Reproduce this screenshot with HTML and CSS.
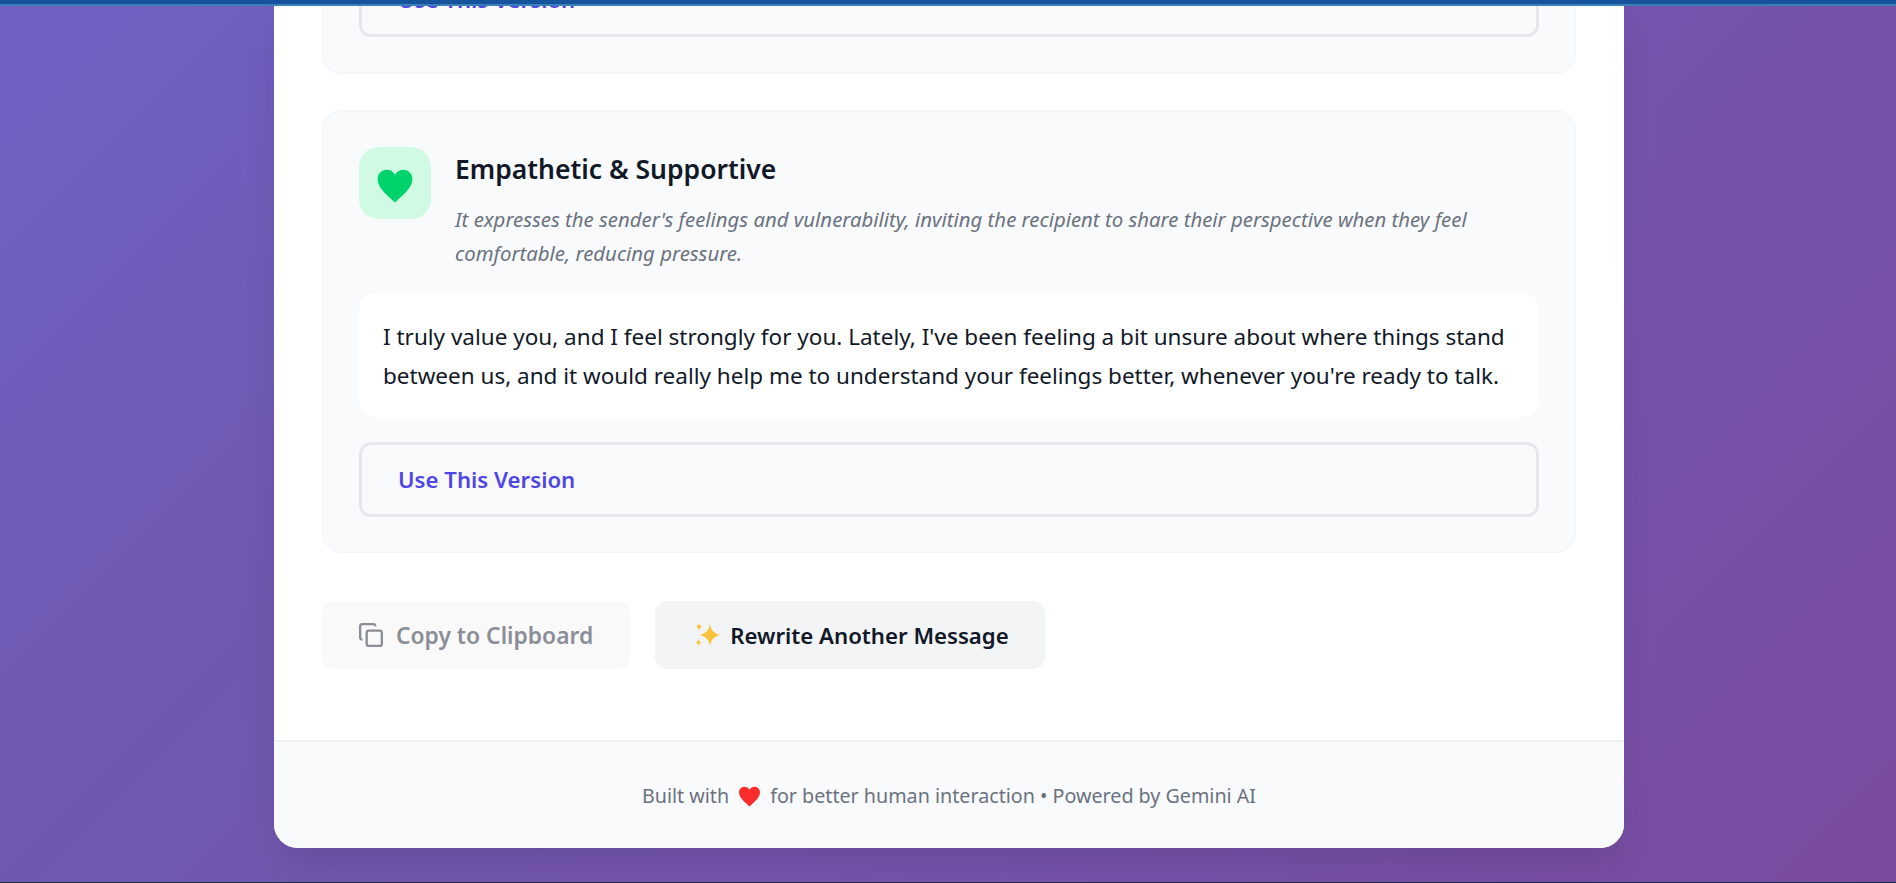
FILE: index.html
```html
<!DOCTYPE html>
<html lang="en">
<head>
    <meta charset="UTF-8">
    <meta name="viewport" content="width=device-width, initial-scale=1.0">
    <title>Message Rewriter</title>
    <link rel="stylesheet" href="styles.css">
</head>
<body>

    <div class="top-bar"></div>

    <main class="card">
        <div class="results">
            <section class="option option-clipped">
                <button class="use-btn" type="button">Use This Version</button>
            </section>

            <section class="option">
                <div class="option-head">
                    <div class="option-icon">
                        <svg viewBox="0 0 24 24" width="38" height="38" aria-hidden="true">
                            <path fill="#00d36b" d="M12 22.4C9.600 20 1 14 1 7.600 1 4.200 3.600 1.700 6.700 1.700c2.200 0 4.100 1.100 5.300 3 1.200-1.900 3.100-3 5.300-3 3.100 0 5.700 2.500 5.700 5.900 0 6.400-8.600 12.400-11 14.800z"/>
                        </svg>
                    </div>
                    <div class="option-info">
                        <h3>Empathetic &amp; Supportive</h3>
                        <p>It expresses the sender's feelings and vulnerability, inviting the recipient to share their perspective when they feel comfortable, reducing pressure.</p>
                    </div>
                </div>
                <div class="message">I truly value you, and I feel strongly for you. Lately, I've been feeling a bit unsure about where things stand between us, and it would really help me to understand your feelings better, whenever you're ready to talk.</div>
                <button class="use-btn" type="button">Use This Version</button>
            </section>
        </div>

        <div class="actions">
            <button class="action-btn copy-btn" type="button">
                <svg viewBox="0 0 24 24" width="26" height="26" fill="none" stroke="currentColor" stroke-width="2.200" aria-hidden="true">
                    <rect x="8" y="8" width="14" height="14" rx="2"/>
                    <path d="M4 16c-1.100 0-2-.9-2-2V4c0-1.100.9-2 2-2h10c1.100 0 2 .9 2 2"/>
                </svg>
                Copy to Clipboard
            </button>
            <button class="action-btn rewrite-btn" type="button">
                <svg viewBox="0 0 26 28" width="26" height="28" aria-hidden="true">
                    <path fill="#fcc23c" d="M16 3c1 6 3.500 8.800 10 11-6.500 2.200-9 5-10 11-1-6-3.500-8.800-10-11 6.500-2.200 9-5 10-11z"/>
                    <path fill="#fcc23c" d="M5 2c.5 2.200 1.300 3 3.200 3.700C6.300 6.400 5.500 7.200 5 9.400 4.500 7.200 3.700 6.400 1.800 5.700 3.700 5 4.500 4.200 5 2zM4.500 18c.4 2 1.200 2.800 3 3.500-1.800.7-2.600 1.500-3 3.500-.4-2-1.200-2.800-3-3.500 1.800-.7 2.600-1.500 3-3.500z"/>
                </svg>
                Rewrite Another Message
            </button>
        </div>

        <footer>
            Built with
            <svg class="footer-heart" viewBox="0 0 24 24" width="23" height="23" aria-hidden="true">
                <path fill="#fb2c2c" d="M12 22.400C9.600 20 1 14 1 7.600 1 4.200 3.600 1.700 6.700 1.700c2.200 0 4.100 1.100 5.300 3 1.200-1.900 3.100-3 5.300-3 3.100 0 5.700 2.500 5.700 5.900 0 6.400-8.600 12.400-11 14.800z"/>
            </svg>
            for better human interaction • Powered by Gemini AI
        </footer>
    </main>

</body>
</html>
```

FILE: styles.css
```css
html, body {
    height: 883px;
    overflow: hidden;
}

body {
    font-family: 'Noto Sans', 'Open Sans', sans-serif;
    margin: 0;
    padding-left: 2px;
    background-image: linear-gradient(135deg, #7062c4 0%, #7058b0 32%, #7553ad 68%, #794ba0 100%);
    color: #111827;
    border-bottom: 1px solid #16283c;
    box-sizing: border-box;
}

.top-bar {
    position: fixed;
    top: 0;
    left: 0;
    right: 0;
    height: 6px;
    background-color: #15539c;
    box-shadow: inset 0 -2px 0 #3a7fb8, inset 0 -1px 0 #15539c;
    z-index: 10;
}

.card {
    width: 1350px;
    margin: 0 auto;
    background-color: #fff;
    border-radius: 0 0 24px 24px;
    box-shadow: 0 20px 40px -8px rgba(0, 0, 0, 0.12);
}

.results {
    padding: 0 48px;
    display: flex;
    flex-direction: column;
    gap: 36px;
}

.option {
    background-color: #f9fafb;
    border: 1px solid #f3f4f6;
    border-radius: 20px;
    padding: 36px 36px 35px;
}

.option-clipped {
    border-top: none;
    border-radius: 0 0 20px 20px;
    margin-top: -38px;
    padding: 0 36px 36px;
}

.option-head {
    display: flex;
    gap: 24px;
    margin-bottom: 23px;
}

.option-icon {
    flex: none;
    box-sizing: border-box;
    width: 72px;
    height: 72px;
    padding-top: 6px;
    border-radius: 20px;
    background-color: #d1fae5;
    display: flex;
    align-items: center;
    justify-content: center;
}

.option-info h3 {
    margin: 0 0 11px;
    font-size: 26.5px;
    line-height: 44px;
    font-weight: 600;
    color: #111827;
}

.option-info p {
    margin: 0;
    font-size: 20.35px;
    line-height: 34px;
    font-style: italic;
    color: #6b7280;
}

.message {
    background-color: #fff;
    border-radius: 16px;
    padding: 25px 24px 22px;
    font-size: 22.5px;
    line-height: 38.5px;
    margin-bottom: 25px;
}

.use-btn {
    display: block;
    width: 100%;
    height: 75px;
    padding: 0 36px;
    text-align: left;
    background-color: transparent;
    border: 3px solid #e5e7eb;
    border-radius: 12px;
    font-family: inherit;
    font-size: 22.2px;
    font-weight: 600;
    color: #4f46e5;
}

.actions {
    display: flex;
    gap: 25px;
    padding: 48px 48px 71px;
}

.action-btn {
    display: flex;
    align-items: center;
    gap: 12px;
    height: 68px;
    padding: 0 36px;
    border: none;
    border-radius: 12px;
    font-family: inherit;
    font-size: 22.2px;
    font-weight: 600;
    background-color: #f3f4f6;
    color: #111827;
}

.copy-btn {
    font-size: 22.8px;
    padding-right: 37px;
    background-color: #f9f9fa;
    color: #8c8e97;
}

.rewrite-btn {
    gap: 10px;
    padding-left: 39px;
}

footer {
    background-color: #f9fafb;
    border-top: 2px solid #eceef1;
    border-radius: 0 0 24px 24px;
    height: 106px;
    display: flex;
    align-items: center;
    justify-content: center;
    gap: 6px;
    font-size: 19.7px;
    color: #6b7280;
}

.footer-heart {
    margin: 2px 3px 0 3px;
}
```
